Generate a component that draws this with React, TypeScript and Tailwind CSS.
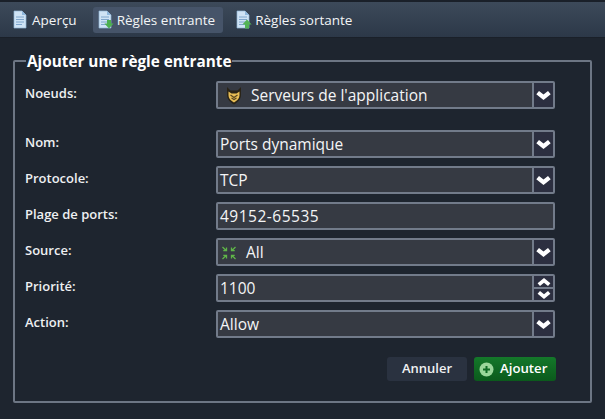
import type { ReactNode } from "react";

function DocIcon({ arrow }: { arrow?: "down" | "up" }) {
  return (
    <svg width="17" height="19" viewBox="0 0 17 19" className="shrink-0">
      <path d="M2 1h8l4 4v13H2z" fill="#cfe3f5" stroke="#8fb4d6" strokeWidth="0.7" />
      <path d="M10 1v4h4z" fill="#8fb8dd" />
      <path d="M4 7h8M4 9.500h8M4 12h8M4 14.500h6" stroke="#7fa6cc" strokeWidth="1" />
      {arrow === "down" && <path d="M10 10h4v3.500h2.600L12 18.600 7.400 13.500H10z" fill="#4caf50" />}
      {arrow === "up" && <path d="M12 9.500l4.600 5H14v4h-4v-4H7.400z" fill="#53b356" />}
    </svg>
  );
}

function Tab({ label, arrow, active }: { label: string; arrow?: "down" | "up"; active?: boolean }) {
  return (
    <div className={`flex h-[26px] items-center gap-[3px] rounded-[3px] pl-[4px] pr-[8px] ${active ? "bg-[#465469]" : ""}`}>
      <DocIcon arrow={arrow} />
      <span className="pt-[1px] text-[13.500px] text-[#f2f4f6]">{label}</span>
    </div>
  );
}

function Chevron({ up, small }: { up?: boolean; small?: boolean }) {
  const w = small ? 14 : 15;
  return (
    <svg width={w} height={small ? 8 : 9} viewBox="0 0 16 10">
      <path d={up ? "M8 0l8 6.500L13 10 8 6 3 10 0 6.500z" : "M0 3.500L3 0l5 4 5-4 3 3.500L8 10z"} fill="#fff" />
    </svg>
  );
}

function ShieldIcon() {
  return (
    <svg width="18" height="18" viewBox="0 0 18 18">
      <path d="M2 0l3.500 3.500h7L16 0v8c0 4.500-3.500 7.500-7 9.500C5.500 15.500 2 12.500 2 8z" fill="#2a2418" />
      <path d="M3.500 4.500l3 2h5l3-2V8c0 3.500-2.500 5.800-5.500 7.500C6 13.800 3.500 11.500 3.500 8z" fill="#e8bd55" />
      <path d="M5.500 8l3.500 2.500L12.500 8M6.500 11l2.500 1.500 2.500-1.500" fill="none" stroke="#5a4720" strokeWidth="1.200" />
    </svg>
  );
}

function ArrowsIcon() {
  return (
    <svg width="16" height="16" viewBox="0 0 16 16" fill="none" stroke="#5fb548" strokeWidth="1.300">
      <path d="M1.500 2L5 5.500M5.500 2.500v3.200H2.300M14.500 2L11 5.500M10.500 2.500v3.200h3.200M1.500 14L5 10.500M5.500 13.500v-3.200H2.300M14.500 14L11 10.500M10.500 13.500v-3.200h3.200" />
    </svg>
  );
}

function Field({ label, children, control = "select", className = "" }: { label: string; children: ReactNode; control?: "select" | "spin" | "none"; className?: string }) {
  return (
    <div className={`grid grid-cols-[191px_339px] ${className}`}>
      <div className="pt-[3px] text-[13px] font-semibold text-[#eef0f2]">{label}</div>
      <div className="flex h-[28px] rounded-[2px] border-2 border-[#727b8a] bg-[#363a43]">
        <div className="flex min-w-0 flex-1 items-center px-[2px] pt-[1px] text-[15.500px] text-[#f4f5f6]">{children}</div>
        {control === "select" && (
          <div className="flex w-[21px] items-center justify-center border-l-2 border-[#727b8a] bg-[#2c2f40]">
            <Chevron />
          </div>
        )}
        {control === "spin" && (
          <div className="flex w-[21px] flex-col border-l-2 border-[#727b8a] bg-[#2c2f40]">
            <div className="flex flex-1 items-center justify-center border-b-2 border-[#727b8a]">
              <Chevron up small />
            </div>
            <div className="flex flex-1 items-center justify-center">
              <Chevron small />
            </div>
          </div>
        )}
      </div>
    </div>
  );
}

export default function App() {
  return (
    <div className="h-[419px] w-[605px] overflow-hidden bg-[#1e252f] font-['Open_Sans','Noto_Sans',sans-serif]">
      <div className="flex h-[38px] items-center gap-[8px] border-t-2 border-b border-t-[#1a2029] border-b-[#1a2029] bg-gradient-to-b from-[#3d4a5a] to-[#2c3848] pl-[8px]">
        <Tab label="Aperçu" />
        <Tab label="Règles entrante" arrow="down" active />
        <Tab label="Règles sortante" arrow="up" />
      </div>

      <div className="px-[13px] pt-[16px]">
        <fieldset className="h-[349px] rounded-[2px] border-2 border-[#6d7684] pl-[10px]">
          <legend className="ml-[1px] px-[1px] text-[15.300px] font-bold leading-[14px] text-white">Ajouter une règle entrante</legend>
          <div className="flex flex-col gap-[8px] pt-[13px]">
            <Field label="Noeuds:" className="mb-[13px]">
              <span className="ml-[5px] mr-[8px]"><ShieldIcon /></span>
              Serveurs de l'application
            </Field>
            <Field label="Nom:">Ports dynamique</Field>
            <Field label="Protocole:">TCP</Field>
            <Field label="Plage de ports:" control="none"><span className="tracking-[0.500px]">49152-65535</span></Field>
            <Field label="Source:">
              <span className="ml-[1px] mr-[9px]"><ArrowsIcon /></span>
              All
            </Field>
            <Field label="Priorité:" control="spin">1100</Field>
            <Field label="Action:">Allow</Field>
          </div>
          <div className="mt-[19px] flex w-[531px] justify-end gap-[7px]">
            <button className="h-[24px] w-[80px] rounded-[3px] bg-[#2a3240] text-[13px] font-semibold text-[#f0f1f3]">Annuler</button>
            <button className="flex h-[24px] w-[82px] items-center gap-[6px] rounded-[3px] bg-gradient-to-b from-[#14782a] to-[#0b5a1c] pl-[5px] text-[13.200px] font-semibold text-white">
              <svg width="15" height="15" viewBox="0 0 15 15">
                <circle cx="7.500" cy="7.500" r="7" fill="#9ad69a" />
                <path d="M7.500 4v7M4 7.500h7" stroke="#0f6a24" strokeWidth="2" />
              </svg>
              Ajouter
            </button>
          </div>
        </fieldset>
      </div>
    </div>
  );
}
